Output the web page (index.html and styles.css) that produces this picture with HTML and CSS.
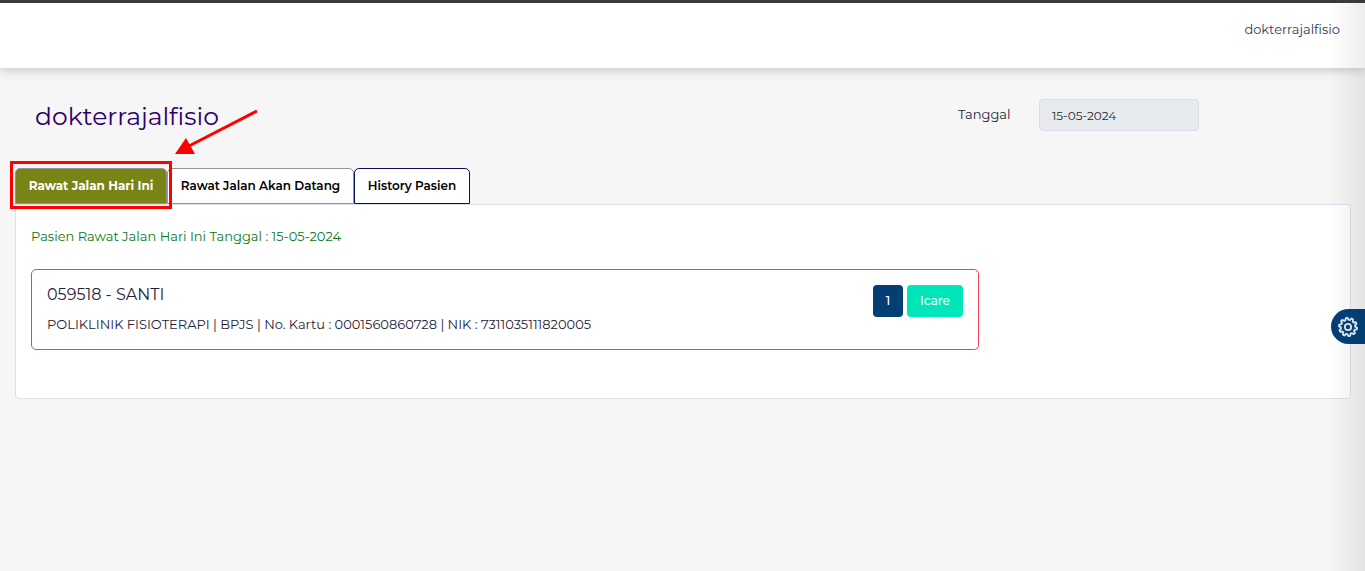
FILE: index.html
```html
<!DOCTYPE html>
<html lang="id">
<head>
<meta charset="utf-8">
<title>Rawat Jalan</title>
<link rel="stylesheet" href="styles.css">
</head>
<body>
<header class="topbar"><span class="user">dokterrajalfisio</span></header>
<main class="page">
  <div class="heading">
    <h1 class="title">dokterrajalfisio</h1>
    <label class="date-label" for="tanggal">Tanggal</label>
    <input class="date-input" id="tanggal" type="text" value="15-05-2024" readonly>
  </div>
  <div class="tabs" role="tablist">
    <div class="marked">
      <button class="tab tab-active" type="button" role="tab" aria-selected="true">Rawat Jalan Hari Ini</button>
      <span class="marker"></span>
      <svg class="arrow" viewBox="0 0 90 50" aria-hidden="true"><path d="M87 5 19 40" stroke="#f00" stroke-width="3" fill="none"/><path d="M5 48 16 32 25 48Z" fill="#f00"/></svg>
    </div>
    <button class="tab tab-next" type="button" role="tab" aria-selected="false">Rawat Jalan Akan Datang</button>
    <button class="tab tab-history" type="button" role="tab" aria-selected="false">History Pasien</button>
  </div>
  <section class="panel">
    <p class="summary">Pasien Rawat Jalan Hari Ini Tanggal : 15-05-2024</p>
    <article class="patient">
      <div class="patient-info">
        <h2 class="patient-name">059518 - SANTI</h2>
        <p class="patient-detail">POLIKLINIK FISIOTERAPI | BPJS | No. Kartu : 0001560860728 | NIK : 7311035111820005</p>
      </div>
      <div class="actions">
        <button class="btn btn-number" type="button">1</button>
        <button class="btn btn-icare" type="button">Icare</button>
      </div>
    </article>
  </section>
</main>
<div class="edge-shadow"></div>
<button class="settings" type="button" aria-label="Pengaturan">
  <svg class="gear" viewBox="0 0 24 24" fill="none" stroke="#d9e5f0" stroke-width="2" stroke-linejoin="round" aria-hidden="true"><g transform="rotate(-8 12 12)"><path d="M10.2 4.4 11.1 2H12.9L13.8 4.4 15 4.8 17.2 3.4 18.6 4.5 17.9 6.9 18.7 8 21.2 8.1 21.7 9.8 19.8 11.3V12.7L21.7 14.2 21.2 15.9 18.7 16 17.9 17.1 18.6 19.5 17.2 20.6 15 19.2 13.8 19.6 12.9 22H11.1L10.2 19.6 9 19.2 6.8 20.6 5.4 19.5 6.1 17.1 5.3 16 2.8 15.9 2.3 14.2 4.2 12.7V11.3L2.3 9.8 2.8 8.1 5.3 8 6.1 6.9 5.4 4.5 6.8 3.4 9 4.8Z"/><circle cx="12" cy="12" r="3.4"/></g></svg>
</button>
</body>
</html>
```
FILE: styles.css
```css
* { box-sizing: border-box; }
body {
  margin: 0;
  min-height: 100vh;
  background: #f6f6f6;
  color: #1f2338;
  font: 13px/20px Montserrat, Inter, sans-serif;
}
h1, h2, p { margin: 0; font-weight: 400; }
button, input { font: inherit; }
.topbar {
  display: flex;
  justify-content: flex-end;
  height: 68px;
  padding: 16px 25px 0;
  border-top: 3px solid #3b3a3b;
  background: #fff;
  box-shadow: 0 2px 10px rgba(0, 0, 0, .2);
}
.user { color: #3a3a4a; }
.page { padding: 31px 14px 0 15px; }
.heading {
  display: flex;
  align-items: flex-start;
  height: 69px;
  padding: 0 152px 0 20px;
}
.title { flex: 1; color: #2d006b; font-size: 25px; line-height: 34px; }
.date-label { width: 81px; line-height: 30px; }
.date-input {
  width: 160px;
  height: 32px;
  padding: 0 12px;
  border: 1px solid #d7dce8;
  border-radius: 4px;
  background: #e8ebee;
  color: #1f2338;
  font-size: 12px;
}
.tabs { display: flex; }
.marked { position: relative; }
.tab {
  height: 36px;
  padding: 0 10px;
  border: 1px solid #9b9299;
  border-radius: 5px 5px 0 0;
  background: #fff;
  color: #000;
  font-size: 12px;
  font-weight: 600;
  white-space: nowrap;
}
.tab-active { min-width: 152px; background: #788416; color: #fff; font-weight: 700; }
.tab-next { min-width: 187px; }
.tab-history { min-width: 116px; border-color: #06105f; }
.marker { position: absolute; inset: -7px -5px -5px; border: 3px solid #f00; pointer-events: none; }
.arrow { position: absolute; left: 155px; top: -62px; width: 90px; height: 50px; }
.panel {
  padding: 21px 15px 48px;
  border: 1px solid #dde0ec;
  border-radius: 0 4px 4px 4px;
  background: #fff;
}
.summary { color: #0a7a1b; }
.patient {
  display: flex;
  justify-content: space-between;
  width: calc(75% - 30px);
  min-height: 81px;
  margin-top: 23px;
  padding: 15px;
  border: 1px solid #f43f5c;
  border-radius: 5px;
}
.patient-name { font-size: 16px; line-height: 20px; }
.patient-detail { margin-top: 9px; }
.actions { display: flex; align-items: flex-start; gap: 4px; }
.btn {
  height: 32px;
  padding: 0;
  border: 0;
  border-radius: 4px;
  color: #fff;
  font-size: 12px;
  font-weight: 500;
}
.btn-number { width: 30px; background: #043e74; }
.btn-icare { width: 56px; background: #00e6b8; }
.edge-shadow {
  position: fixed;
  inset: 3px 0 0 auto;
  width: 36px;
  background: linear-gradient(to right, transparent, rgba(0, 0, 0, .07));
  pointer-events: none;
}
.settings {
  position: fixed;
  right: 0;
  top: 309px;
  display: flex;
  align-items: center;
  width: 34px;
  height: 35px;
  padding: 0 0 0 6px;
  border: 0;
  border-radius: 18px 0 0 18px;
  background: #043e74;
}
.gear { width: 22px; height: 22px; }
```
